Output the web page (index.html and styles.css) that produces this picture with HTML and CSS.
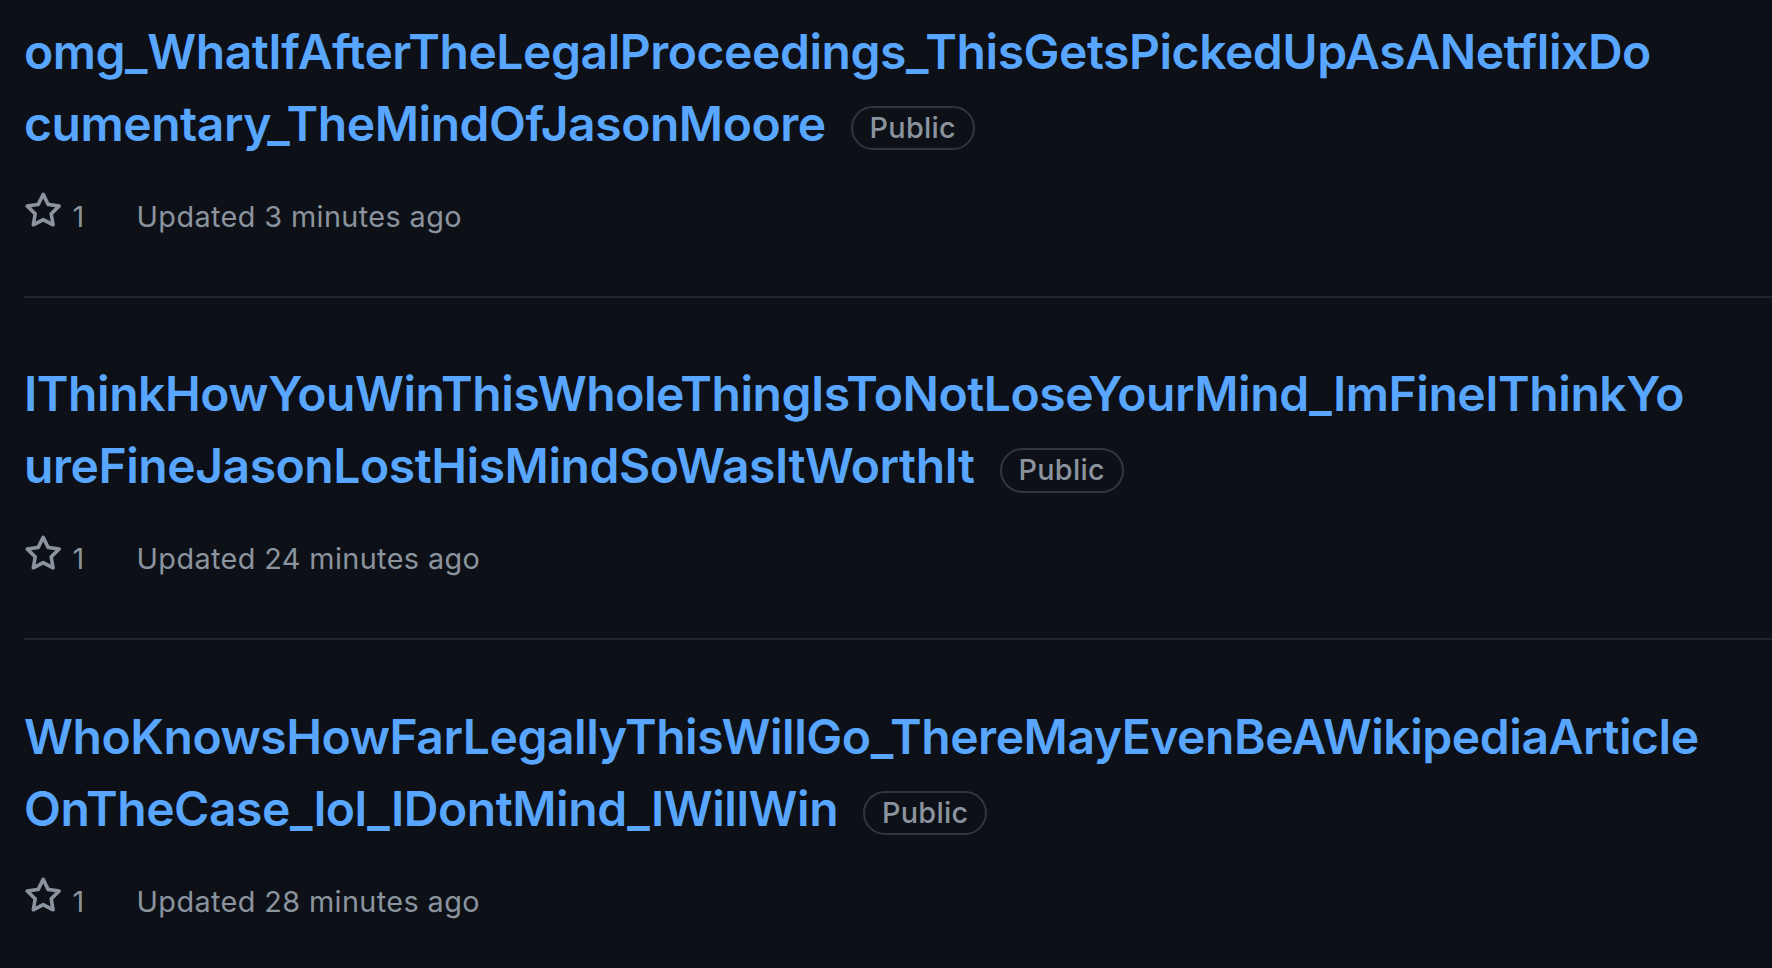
FILE: index.html
```html
<!DOCTYPE html>
<html lang="en">
<head>
<meta charset="utf-8">
<title>Repositories</title>
<link rel="stylesheet" href="styles.css">
</head>
<body>
<ul class="repo-list">
  <li class="repo">
    <h3 class="repo-title"><a class="repo-link" href="#">omg_WhatIfAfterTheLegalProceedings_ThisGetsPickedUpAsANetflixDo<br>cumentary_TheMindOfJasonMoore</a><span class="label">Public</span></h3>
    <div class="meta">
      <a class="stars" href="#"><svg class="star" viewBox="0 0 16 16" aria-hidden="true"><path d="M8 .25a.75.75 0 0 1 .673.418l1.882 3.815 4.21.612a.75.75 0 0 1 .416 1.279l-3.046 2.97.719 4.192a.751.751 0 0 1-1.088.791L8 12.347l-3.766 1.98a.75.75 0 0 1-1.088-.79l.72-4.194L.818 6.374a.75.75 0 0 1 .416-1.28l4.21-.611L7.327.668A.75.75 0 0 1 8 .25Zm0 2.445L6.615 5.5a.75.75 0 0 1-.564.41l-3.097.45 2.24 2.184a.75.75 0 0 1 .216.664l-.528 3.084 2.769-1.456a.75.75 0 0 1 .698 0l2.77 1.456-.53-3.084a.75.75 0 0 1 .216-.664l2.24-2.183-3.096-.45a.75.75 0 0 1-.564-.41L8 2.694Z"/></svg><span class="count">1</span></a>
      <span class="updated">Updated 3 minutes ago</span>
    </div>
  </li>
  <li class="repo">
    <h3 class="repo-title"><a class="repo-link" href="#">IThinkHowYouWinThisWholeThingIsToNotLoseYourMind_ImFineIThinkYo<br>ureFineJasonLostHisMindSoWasItWorthIt</a><span class="label">Public</span></h3>
    <div class="meta">
      <a class="stars" href="#"><svg class="star" viewBox="0 0 16 16" aria-hidden="true"><path d="M8 .25a.75.75 0 0 1 .673.418l1.882 3.815 4.21.612a.75.75 0 0 1 .416 1.279l-3.046 2.97.719 4.192a.751.751 0 0 1-1.088.791L8 12.347l-3.766 1.98a.75.75 0 0 1-1.088-.79l.72-4.194L.818 6.374a.75.75 0 0 1 .416-1.28l4.21-.611L7.327.668A.75.75 0 0 1 8 .25Zm0 2.445L6.615 5.5a.75.75 0 0 1-.564.41l-3.097.45 2.24 2.184a.75.75 0 0 1 .216.664l-.528 3.084 2.769-1.456a.75.75 0 0 1 .698 0l2.77 1.456-.53-3.084a.75.75 0 0 1 .216-.664l2.24-2.183-3.096-.45a.75.75 0 0 1-.564-.41L8 2.694Z"/></svg><span class="count">1</span></a>
      <span class="updated">Updated 24 minutes ago</span>
    </div>
  </li>
  <li class="repo">
    <h3 class="repo-title"><a class="repo-link" href="#">WhoKnowsHowFarLegallyThisWillGo_ThereMayEvenBeAWikipediaArticle<br>OnTheCase_lol_IDontMind_IWillWin</a><span class="label">Public</span></h3>
    <div class="meta">
      <a class="stars" href="#"><svg class="star" viewBox="0 0 16 16" aria-hidden="true"><path d="M8 .25a.75.75 0 0 1 .673.418l1.882 3.815 4.21.612a.75.75 0 0 1 .416 1.279l-3.046 2.97.719 4.192a.751.751 0 0 1-1.088.791L8 12.347l-3.766 1.98a.75.75 0 0 1-1.088-.79l.72-4.194L.818 6.374a.75.75 0 0 1 .416-1.28l4.21-.611L7.327.668A.75.75 0 0 1 8 .25Zm0 2.445L6.615 5.5a.75.75 0 0 1-.564.41l-3.097.45 2.24 2.184a.75.75 0 0 1 .216.664l-.528 3.084 2.769-1.456a.75.75 0 0 1 .698 0l2.77 1.456-.53-3.084a.75.75 0 0 1 .216-.664l2.24-2.183-3.096-.45a.75.75 0 0 1-.564-.41L8 2.694Z"/></svg><span class="count">1</span></a>
      <span class="updated">Updated 28 minutes ago</span>
    </div>
  </li>
</ul>
</body>
</html>
```

FILE: styles.css
```css
html, body {
  margin: 0;
  padding: 0;
  background: #0d1117;
  height: 100%;
  overflow: hidden;
}

body {
  font-family: Inter, "Noto Sans", "Liberation Sans", sans-serif;
  color: #e6edf3;
}

.repo-list {
  list-style: none;
  margin: 0;
  padding: 0 0 0 24px;
}

.repo {
  padding: 60.5px 0 57.8px;
  border-bottom: 2px solid #21262d;
}

.repo:first-child {
  padding-top: 16px;
}

.repo-title {
  margin: 0;
  font-size: 48px;
  line-height: 72px;
  font-weight: 600;
  letter-spacing: -0.45px;
  white-space: nowrap;
}

.repo-link {
  color: #58a6ff;
  text-decoration: none;
}

.label {
  display: inline-block;
  margin-left: 25px;
  padding: 0 16.8px;
  font-size: 28.8px;
  line-height: 40.5px;
  font-weight: 500;
  letter-spacing: 0.3px;
  color: #8b949e;
  border: 2.4px solid #30363d;
  border-radius: 999px;
  vertical-align: middle;
}

.meta {
  margin-top: 35px;
  display: flex;
  align-items: center;
  height: 43.2px;
  font-size: 28.8px;
  line-height: 43.2px;
  letter-spacing: 0.4px;
  color: #8b949e;
}

.stars {
  display: inline-flex;
  align-items: center;
  color: #8b949e;
  text-decoration: none;
  margin-right: 52px;
}

.star {
  flex: none;
  width: 38.4px;
  height: 38.4px;
  fill: #8b949e;
  margin: -5px 10px 5px 0;
}

.updated {
  white-space: nowrap;
}
```
